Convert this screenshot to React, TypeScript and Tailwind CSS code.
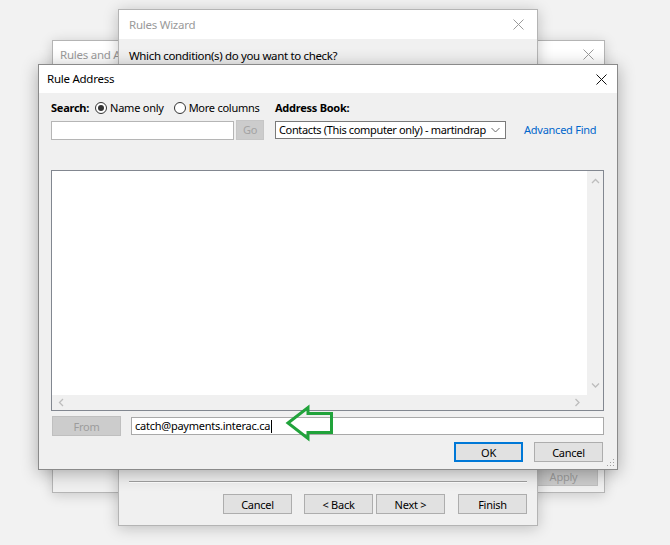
const FONT = "font-['Noto_Sans','Open_Sans',sans-serif]"

function CloseX({ color }: { color: string }) {
  return (
    <svg width="11" height="11" viewBox="0 0 11 11" fill="none">
      <path d="M0.5 0.5l10 10M10.5 0.5l-10 10" stroke={color} strokeWidth="1" />
    </svg>
  )
}

function WinButton({ label, disabled, primary, className = '' }: { label: string; disabled?: boolean; primary?: boolean; className?: string }) {
  const base = 'h-[20px] w-[69px] flex items-center justify-center text-[11px] leading-none'
  if (disabled) return <div className={`${base} bg-[#cccccc] border border-[#bfbfbf] text-[#9c9c9c] ${className}`}>{label}</div>
  if (primary) return <div className={`${base} bg-[#e1e1e1] border-2 border-[#0078d7] text-black ${className}`}>{label}</div>
  return <div className={`${base} bg-[#e1e1e1] border border-[#adadad] text-black ${className}`}>{label}</div>
}

function Chevron({ dir }: { dir: 'up' | 'down' | 'left' | 'right' }) {
  const d = {
    up: 'M1 5l3.5-3.5L8 5',
    down: 'M1 1.5L4.5 5 8 1.5',
    left: 'M5 1L1.5 4.5 5 8',
    right: 'M1.5 1L5 4.5 1.5 8',
  }[dir]
  const vertical = dir === 'up' || dir === 'down'
  return (
    <svg width={vertical ? 9 : 7} height={vertical ? 7 : 9} viewBox={vertical ? '0 0 9 7' : '0 0 7 9'} fill="none">
      <path d={d} stroke="#bdbdbd" strokeWidth="1.3" />
    </svg>
  )
}

function Radio({ checked }: { checked?: boolean }) {
  return (
    <span className="w-[12px] h-[12px] rounded-full border border-[#333] bg-white flex items-center justify-center">
      {checked && <span className="w-[6px] h-[6px] rounded-full bg-[#333]" />}
    </span>
  )
}

export default function App() {
  return (
    <div className={`relative w-[670px] h-[545px] overflow-hidden bg-[#f2f2f2] ${FONT} text-[11px] tracking-[-0.25px] text-black`}>
      {/* Rules and Alerts (back) */}
      <div className="absolute left-[52px] top-[40px] w-[553px] h-[453px] flex flex-col bg-[#f0f0f0] border border-[#b4b4b4] shadow-[0_2px_12px_rgba(0,0,0,0.18)]">
        <div className="h-[27px] bg-white flex items-center justify-between pl-[7px] pr-[10px]">
          <span className="w-[58px] overflow-hidden whitespace-nowrap text-[#9a9a9a] text-[11.5px]">Rules and Alerts</span>
          <CloseX color="#9a9a9a" />
        </div>
        <div className="flex-1" />
        <div className="flex justify-end pr-[6px] pb-[6px]">
          <WinButton label="Apply" disabled />
        </div>
      </div>

      {/* Rules Wizard (middle) */}
      <div className="absolute left-[118px] top-[9px] w-[420px] h-[517px] flex flex-col bg-[#f0f0f0] border border-[#b4b4b4] shadow-[0_2px_14px_rgba(0,0,0,0.22)]">
        <div className="h-[29px] bg-white flex items-center justify-between pl-[10px] pr-[13px]">
          <span className="text-[#9a9a9a] text-[11.5px]">Rules Wizard</span>
          <CloseX color="#9a9a9a" />
        </div>
        <div className="pl-[10px] pt-[8px] text-[11.5px] tracking-[-0.35px]">Which condition(s) do you want to check?</div>
        <div className="flex-1" />
        <div className="mx-[10px] h-[2px] border-t border-[#a0a0a0] border-b border-b-white" />
        <div className="flex justify-end pr-[10px] pt-[11px] pb-[11px]">
          <WinButton label="Cancel" />
          <WinButton label="< Back" className="ml-[12px]" />
          <WinButton label="Next >" className="ml-[3px]" />
          <WinButton label="Finish" className="ml-[13px]" />
        </div>
      </div>

      {/* Rule Address (front) */}
      <div className="absolute left-[38px] top-[64px] w-[580px] h-[406px] flex flex-col bg-[#f0f0f0] border border-[#8a8a8a] shadow-[0_3px_16px_rgba(0,0,0,0.3)]">
        <div className="h-[28px] bg-white flex items-center justify-between pl-[8px] pr-[10px] shrink-0">
          <span className="text-[11.5px]">Rule Address</span>
          <CloseX color="#111" />
        </div>
        <div className="relative flex-1 flex flex-col pl-[12px] pr-[13px] pt-[7px]">
          {/* search row */}
          <div className="flex items-center h-[16px]">
            <div className="w-[224px] flex items-center">
              <span className="font-bold">Search:</span>
              <span className="ml-[6px]"><Radio checked /></span>
              <span className="ml-[3px]">Name only</span>
              <span className="ml-[10px]"><Radio /></span>
              <span className="ml-[3px]">More columns</span>
            </div>
            <span className="font-bold">Address Book:</span>
          </div>
          {/* input row */}
          <div className="flex items-center mt-[4px] h-[20px]">
            <div className="w-[183px] h-[19px] bg-white border border-[#b5b5b5]" />
            <div className="ml-[2px] w-[28px] h-[20px] bg-[#cccccc] border border-[#c6c6c6] flex items-center justify-center text-[#a3a3a3]">Go</div>
            <div className="ml-[11px] w-[231px] h-[18px] bg-white border border-[#7a7a7a] flex items-center justify-between pl-[3px] pr-[5px] overflow-hidden">
              <span className="whitespace-nowrap tracking-[-0.35px]">Contacts (This computer only) - martindrap</span>
              <svg className="shrink-0 ml-[4px]" width="9" height="6" viewBox="0 0 9 6" fill="none">
                <path d="M0.5 1l4 4 4-4" stroke="#6b6b6b" strokeWidth="1" />
              </svg>
            </div>
            <span className="ml-[18px] text-[#0066cc]">Advanced Find</span>
          </div>
          {/* list box */}
          <div className="mt-[30px] h-[241px] border border-[#828790] bg-white flex flex-col">
            <div className="flex-1 flex">
              <div className="flex-1" />
              <div className="w-[16px] bg-[#f0f0f0] flex flex-col items-center justify-between pt-[7px] pb-[6px]">
                <Chevron dir="up" />
                <Chevron dir="down" />
              </div>
            </div>
            <div className="h-[15px] bg-[#f0f0f0] flex items-center justify-between pl-[6px] pr-[22px]">
              <Chevron dir="left" />
              <Chevron dir="right" />
            </div>
          </div>
          {/* from row */}
          <div className="flex items-center mt-[5px] h-[20px]">
            <WinButton label="From" disabled className="ml-[1px]" />
            <div className="ml-[10px] flex-1 h-[18px] bg-white border border-[#a9a9a9] flex items-center pl-[3px]">
              <span>catch@payments.interac.ca</span>
              <span className="ml-[1px] w-[1px] h-[13px] bg-black" />
            </div>
          </div>
          {/* ok / cancel */}
          <div className="flex justify-end mt-[6px] pr-[1px]">
            <WinButton label="OK" primary />
            <WinButton label="Cancel" className="ml-[11px]" />
          </div>
          {/* resize grip */}
          <svg className="absolute right-[2px] bottom-[2px]" width="8" height="8" viewBox="0 0 8 8">
            <rect x="6" y="0" width="1" height="1" fill="#a0a0a0" />
            <rect x="3" y="3" width="1" height="1" fill="#a0a0a0" />
            <rect x="6" y="3" width="1" height="1" fill="#a0a0a0" />
            <rect x="0" y="6" width="1" height="1" fill="#a0a0a0" />
            <rect x="3" y="6" width="1" height="1" fill="#a0a0a0" />
            <rect x="6" y="6" width="1" height="1" fill="#a0a0a0" />
          </svg>
        </div>
      </div>

      {/* green annotation arrow */}
      <svg className="absolute left-[284px] top-[404px]" width="52" height="38" viewBox="0 0 52 38" fill="none">
        <path d="M4 19L24 3.5V9.5H47.5V28.5H24V34.5Z" stroke="#21a33b" strokeWidth="3" strokeLinejoin="miter" />
      </svg>
    </div>
  )
}
